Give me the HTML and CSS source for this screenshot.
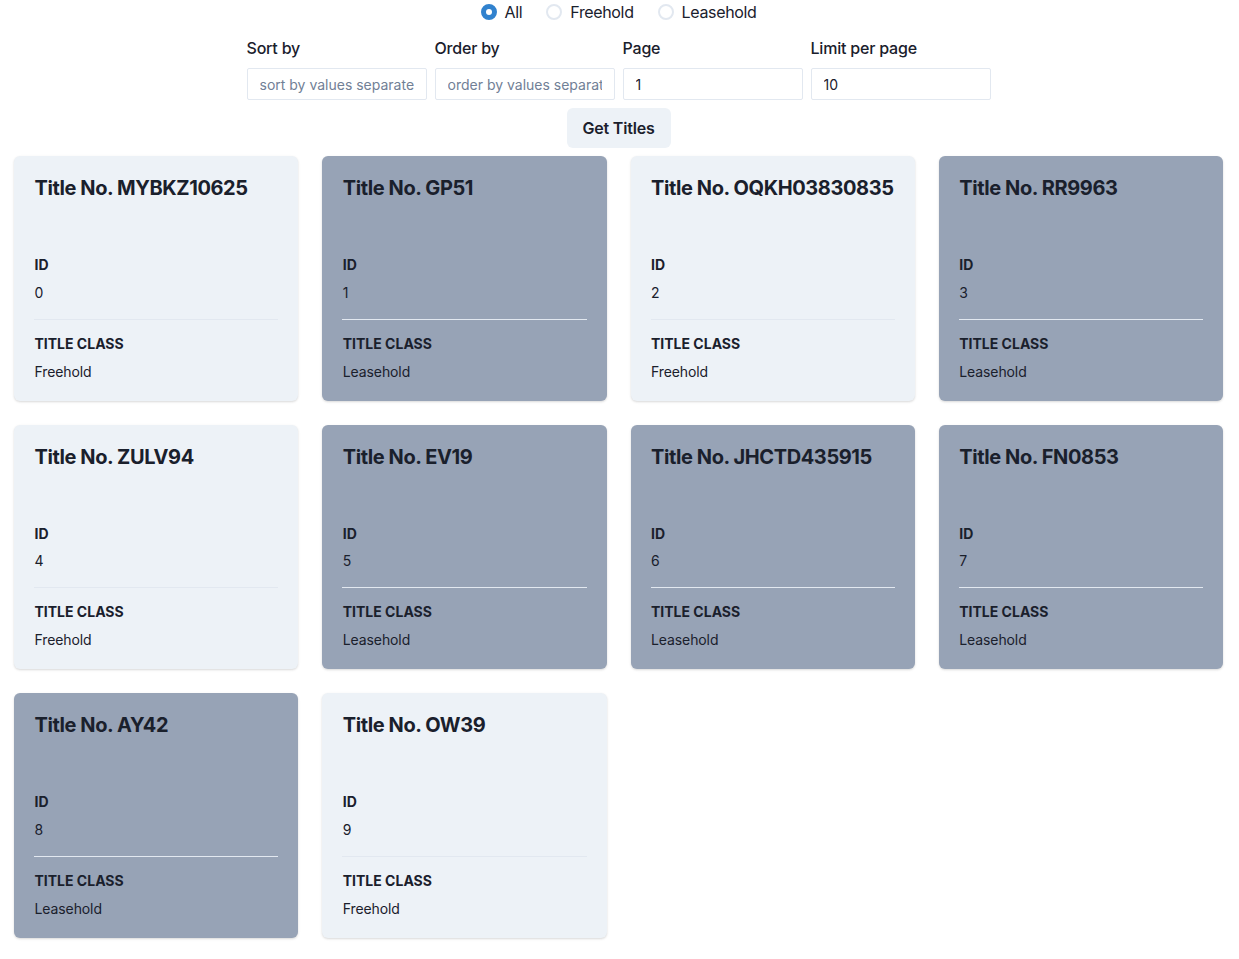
FILE: index.html
```html
<!DOCTYPE html>
<html lang="en">
<head>
<meta charset="utf-8">
<title>Titles</title>
<link rel="stylesheet" href="styles.css">
</head>
<body>
<div class="page">
  <div class="radios">
    <label class="radio"><span class="dot checked"></span><span>All</span></label>
    <label class="radio"><span class="dot"></span><span>Freehold</span></label>
    <label class="radio"><span class="dot"></span><span>Leasehold</span></label>
  </div>
  <div class="fields">
    <div class="field"><label class="flabel">Sort by</label><input class="input" placeholder="sort by values separated by commas"></div>
    <div class="field"><label class="flabel">Order by</label><input class="input" placeholder="order by values separated by commas"></div>
    <div class="field"><label class="flabel">Page</label><input class="input" value="1"></div>
    <div class="field"><label class="flabel">Limit per page</label><input class="input" value="10"></div>
  </div>
  <div class="actions"><button class="btn">Get Titles</button></div>
  <div class="grid">
    <div class="card light"><div class="card-head"><h2 class="title">Title No. MYBKZ10625</h2></div><div class="card-body"><div class="sec"><h3 class="lbl">ID</h3><p class="val">0</p></div><hr class="div"><div class="sec"><h3 class="lbl">Title Class</h3><p class="val">Freehold</p></div></div></div>
    <div class="card dark"><div class="card-head"><h2 class="title">Title No. GP51</h2></div><div class="card-body"><div class="sec"><h3 class="lbl">ID</h3><p class="val">1</p></div><hr class="div"><div class="sec"><h3 class="lbl">Title Class</h3><p class="val">Leasehold</p></div></div></div>
    <div class="card light"><div class="card-head"><h2 class="title">Title No. OQKH03830835</h2></div><div class="card-body"><div class="sec"><h3 class="lbl">ID</h3><p class="val">2</p></div><hr class="div"><div class="sec"><h3 class="lbl">Title Class</h3><p class="val">Freehold</p></div></div></div>
    <div class="card dark"><div class="card-head"><h2 class="title">Title No. RR9963</h2></div><div class="card-body"><div class="sec"><h3 class="lbl">ID</h3><p class="val">3</p></div><hr class="div"><div class="sec"><h3 class="lbl">Title Class</h3><p class="val">Leasehold</p></div></div></div>
    <div class="card light"><div class="card-head"><h2 class="title">Title No. ZULV94</h2></div><div class="card-body"><div class="sec"><h3 class="lbl">ID</h3><p class="val">4</p></div><hr class="div"><div class="sec"><h3 class="lbl">Title Class</h3><p class="val">Freehold</p></div></div></div>
    <div class="card dark"><div class="card-head"><h2 class="title">Title No. EV19</h2></div><div class="card-body"><div class="sec"><h3 class="lbl">ID</h3><p class="val">5</p></div><hr class="div"><div class="sec"><h3 class="lbl">Title Class</h3><p class="val">Leasehold</p></div></div></div>
    <div class="card dark"><div class="card-head"><h2 class="title">Title No. JHCTD435915</h2></div><div class="card-body"><div class="sec"><h3 class="lbl">ID</h3><p class="val">6</p></div><hr class="div"><div class="sec"><h3 class="lbl">Title Class</h3><p class="val">Leasehold</p></div></div></div>
    <div class="card dark"><div class="card-head"><h2 class="title">Title No. FN0853</h2></div><div class="card-body"><div class="sec"><h3 class="lbl">ID</h3><p class="val">7</p></div><hr class="div"><div class="sec"><h3 class="lbl">Title Class</h3><p class="val">Leasehold</p></div></div></div>
    <div class="card dark"><div class="card-head"><h2 class="title">Title No. AY42</h2></div><div class="card-body"><div class="sec"><h3 class="lbl">ID</h3><p class="val">8</p></div><hr class="div"><div class="sec"><h3 class="lbl">Title Class</h3><p class="val">Leasehold</p></div></div></div>
    <div class="card light"><div class="card-head"><h2 class="title">Title No. OW39</h2></div><div class="card-body"><div class="sec"><h3 class="lbl">ID</h3><p class="val">9</p></div><hr class="div"><div class="sec"><h3 class="lbl">Title Class</h3><p class="val">Freehold</p></div></div></div>
  </div>
</div>
</body>
</html>
```
FILE: styles.css
```css
* { box-sizing: border-box; }
html, body { margin: 0; padding: 0; background: #fff; }
body {
  font-family: Inter, "Noto Sans", "Liberation Sans", sans-serif;
  color: #1A202C;
  font-size: 16px;
  line-height: 1.5;
}
.page { padding: 0 16px 21px 14px; }
.radios {
  display: flex;
  justify-content: center;
  gap: 24px;
  height: 24px;
  align-items: center;
  letter-spacing: -0.35px;
}
.radio { display: flex; align-items: center; gap: 8px; font-size: 16px; line-height: 24px; }
.dot {
  width: 16px; height: 16px; border-radius: 50%;
  border: 2px solid #E2E8F0; background: #fff;
  display: inline-block; position: relative;
}
.dot.checked { background: #3182CE; border-color: #3182CE; }
.dot.checked::after {
  content: ""; position: absolute; left: 50%; top: 50%;
  width: 6px; height: 6px; margin: -3px 0 0 -3px;
  background: #fff; border-radius: 50%;
}
.fields {
  display: flex; justify-content: center; gap: 8px;
  margin-top: 12px;
}
.field { width: 180px; display: flex; flex-direction: column; }
.flabel { font-size: 16px; font-weight: 500; line-height: 24px; margin-bottom: 8px; letter-spacing: -0.2px; }
.input {
  height: 32px; width: 100%;
  border: 1px solid #E2E8F0; border-radius: 2px;
  padding: 0 12px; font-family: inherit; font-size: 14px; color: #1A202C;
  background: #fff; outline: none;
}
.input::placeholder { color: #718096; }
.actions { display: flex; justify-content: center; margin-top: 8px; }
.btn {
  height: 40px; padding: 0 16px; border: 0; border-radius: 6px;
  background: #EDF2F7; color: #1A202C;
  font-family: inherit; font-size: 16px; font-weight: 600; letter-spacing: -0.2px;
}
.grid {
  margin-top: 8px;
  display: grid; grid-template-columns: repeat(4, 1fr);
  gap: 24px;
}
.card {
  border-radius: 6px;
  box-shadow: 0 1px 3px 0 rgba(0,0,0,0.1), 0 1px 2px 0 rgba(0,0,0,0.06);
}
.card.light { background: #EDF2F7; }
.card.dark { background: #97A3B6; }
.card-head { padding: 20px 20px 37px 20.5px; }
.title { margin: 0; font-size: 20px; font-weight: 700; line-height: 24px; letter-spacing: -0.4px; white-space: nowrap; }
.card-body { padding: 20px 20px 19px; }
.sec { padding-left: 0.5px; }
.lbl { margin: 0; font-size: 14px; font-weight: 700; line-height: 16.8px; text-transform: uppercase; }
.val { margin: 8px 0 0; font-size: 14px; line-height: 21px; letter-spacing: -0.1px; }
.div { border: 0; border-top: 1px solid #E2E8F0; margin: 16px 0; }
```
